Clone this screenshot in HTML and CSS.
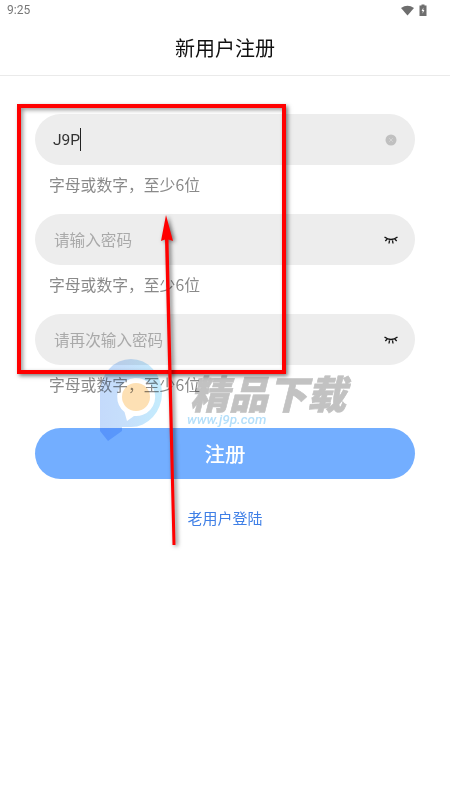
FILE: index.html
```html
<!DOCTYPE html>
<html lang="zh-CN">
<head>
    <meta charset="UTF-8">
    <meta name="viewport" content="width=device-width, initial-scale=1.0">
    <title>新用户注册</title>
    <link rel="stylesheet" href="styles.css">
</head>
<body>
    <div class="status-bar">
        <span class="status-time">9:25</span>
        <div class="status-icons">
            <svg width="13" height="11" viewBox="0 0 13 11"><path d="M0 3 Q6.5 -1.6 13 3 L6.5 10.5 Z" fill="#6e6e6e"/></svg>
            <svg width="8" height="12" viewBox="0 0 8 12"><path d="M2.500 0.500H5.500V1.500H7.500V12H0.500V1.500H2.500Z" fill="#6e6e6e"/><path d="M4.400 3.500L2.600 7H3.800L3.500 9.800L5.400 6H4.200Z" fill="#fff"/></svg>
        </div>
    </div>

    <header class="title-bar">新用户注册</header>

    <form class="form">
        <div class="field">
            <span class="field-value">J9P<i class="caret"></i></span>
            <svg class="clear-icon" width="12" height="12" viewBox="0 0 12 12">
                <circle cx="6" cy="6" r="5.500" fill="#c0c0c0"/>
                <path d="M4.200 4.200L7.800 7.800M7.800 4.200L4.200 7.800" stroke="#d8d8d8" stroke-width="0.800"/>
            </svg>
        </div>
        <p class="hint">字母或数字，至少6位</p>

        <div class="field">
            <span class="field-placeholder">请输入密码</span>
            <svg class="eye-icon" width="14" height="8" viewBox="0 0 14 8">
                <path d="M0.500 1Q7 6 13.500 1M3 3.200L1.300 5M5.500 4.300L5 7.500M8.500 4.300L9 7.500M11 3.200L12.700 5" fill="none" stroke="#111" stroke-width="1.300"/>
            </svg>
        </div>
        <p class="hint">字母或数字，至少6位</p>

        <div class="field">
            <span class="field-placeholder">请再次输入密码</span>
            <svg class="eye-icon" width="14" height="8" viewBox="0 0 14 8">
                <path d="M0.500 1Q7 6 13.500 1M3 3.200L1.300 5M5.500 4.300L5 7.500M8.500 4.300L9 7.500M11 3.200L12.700 5" fill="none" stroke="#111" stroke-width="1.300"/>
            </svg>
        </div>
        <p class="hint">字母或数字，至少6位</p>

        <button type="button" class="submit-btn">注册</button>
        <a class="login-link">老用户登陆</a>
    </form>

    <!-- watermark and red markup sit on top of the screenshot -->
    <div class="watermark">
        <svg class="watermark-logo" width="64" height="84" viewBox="0 0 64 84">
            <defs>
                <linearGradient id="logoBlue" x1="0" y1="0" x2="1" y2="0">
                    <stop offset="0" stop-color="#c4dafb"/>
                    <stop offset="0.4" stop-color="#c6dffb"/>
                    <stop offset="1" stop-color="#c4ecfd"/>
                </linearGradient>
            </defs>
            <path fill="url(#logoBlue)" fill-rule="evenodd" d="M0 35A31 34 0 1 1 31 69H22V73L8 83L0 73ZM24.500 54A19 19 0 1 1 34 57.900L27 63Z"/>
            <circle cx="36" cy="39" r="14" fill="#fde0b4"/>
        </svg>
        <div class="watermark-text">
            <span class="watermark-title">精品下载</span>
            <span class="watermark-url">www.j9p.com</span>
        </div>
    </div>

    <div class="markup-box"></div>
    <svg class="markup-arrow" width="30" height="340" viewBox="0 0 30 340">
        <path d="M13 3L20 29L15.500 27.500L22.500 333H19.500L12 27.500L8 29Z" fill="#f00"/>
    </svg>
</body>
</html>
```

FILE: styles.css
```css
* {
    margin: 0;
    padding: 0;
    box-sizing: border-box;
}

body {
    font-family: "Noto Sans CJK SC", "Noto Sans", sans-serif;
    background-color: #fff;
    color: #333;
    height: 800px;
    overflow: hidden;
    position: relative;
}

.status-bar {
    height: 20px;
    display: flex;
    justify-content: space-between;
    align-items: center;
    padding: 0 23px 0 7px;
}

.status-time {
    font-family: Roboto, sans-serif;
    font-size: 12px;
    color: #777;
}

.status-icons {
    display: flex;
    align-items: center;
    gap: 5px;
}

.title-bar {
    height: 56px;
    display: flex;
    align-items: center;
    justify-content: center;
    font-size: 20px;
    color: #111;
    border-bottom: 1px solid #eaeaea;
}

.form {
    padding: 38px 35px 0;
    display: flex;
    flex-direction: column;
}

.field {
    height: 51px;
    border-radius: 26px;
    background-color: #ededed;
    display: flex;
    align-items: center;
    justify-content: space-between;
    padding: 0 19px;
}

.field-value {
    font-family: Roboto, sans-serif;
    font-size: 15.500px;
    color: #333;
    display: flex;
    align-items: center;
    margin-left: -1px;
}

.caret {
    width: 1px;
    height: 23px;
    background-color: #222;
}

.field-placeholder {
    font-size: 15.600px;
    color: #a9a9a9;
    padding-bottom: 2px;
}

.clear-icon {
    margin-right: -1px;
}

.eye-icon {
    margin-right: -2px;
}

.hint {
    height: 49px;
    padding: 9px 0 0 14px;
    font-size: 15.800px;
    line-height: 22px;
    color: #8a8a8a;
}

.hint:nth-of-type(3) {
    height: 63px;
}

.submit-btn {
    height: 51px;
    border: none;
    border-radius: 26px;
    padding-bottom: 2px;
    background-color: #73aeff;
    color: #fff;
    font-family: inherit;
    font-size: 20.500px;
    font-weight: 500;
}

.login-link {
    margin-top: 28px;
    text-align: center;
    font-size: 15px;
    line-height: 22px;
    color: #3f7fe6;
}

.watermark {
    position: absolute;
    left: 100px;
    top: 358px;
    display: flex;
    pointer-events: none;
    mix-blend-mode: multiply;
}

.watermark-logo {
    flex: none;
}

.watermark-text {
    margin: 15px 0 0 26px;
    display: flex;
    flex-direction: column;
}

.watermark-title {
    font-size: 39px;
    line-height: 38px;
    font-weight: 900;
    font-style: italic;
    color: #c2c2c2;
    -webkit-text-stroke: 0.600px #c2c2c2;
    white-space: nowrap;
}

.watermark-url {
    font-family: Roboto, sans-serif;
    font-size: 13.500px;
    line-height: 14px;
    font-weight: 500;
    font-style: italic;
    color: #b4dffa;
    margin: 1px 0 0 -3px;
}

.markup-box {
    position: absolute;
    left: 17px;
    top: 104px;
    width: 269px;
    height: 270px;
    border: 4px solid #f00;
    box-shadow: 2px 2px 4px rgba(0, 0, 0, 0.5), inset 2px 2px 4px rgba(0, 0, 0, 0.4);
}

.markup-arrow {
    position: absolute;
    left: 153px;
    top: 212px;
    filter: drop-shadow(2px 1px 2px rgba(0, 0, 0, 0.55));
}
```
